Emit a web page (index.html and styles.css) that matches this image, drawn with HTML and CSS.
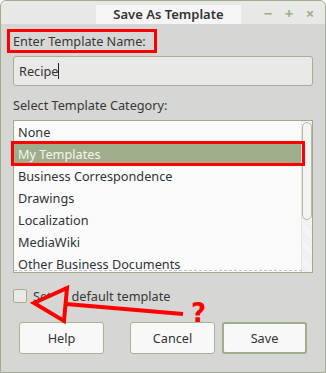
FILE: index.html
```html
<!DOCTYPE html>
<html lang="en">
<head>
<meta charset="UTF-8">
<meta name="viewport" content="width=device-width, initial-scale=1.0">
<title>Save As Template</title>
<link rel="stylesheet" href="styles.css">
</head>
<body>

<div class="window">
  <div class="titlebar">
    <div class="title">Save As Template</div>
    <div class="controls">
      <span class="ctl">&minus;</span>
      <span class="ctl">+</span>
      <span class="ctl">&times;</span>
    </div>
  </div>

  <div class="dialog">
    <div class="label">Enter Template Name:</div>
    <div class="entry">Recipe<span class="caret"></span></div>

    <div class="label second">Select Template Category:</div>
    <div class="list">
      <div class="rows">
        <div class="row">None</div>
        <div class="row selected">My Templates</div>
        <div class="row">Business Correspondence</div>
        <div class="row">Drawings</div>
        <div class="row">Localization</div>
        <div class="row">MediaWiki</div>
        <div class="row">Other Business Documents</div>
      </div>
      <div class="scrollbar"><div class="thumb"></div></div>
    </div>

    <div class="check">
      <span class="box"></span>
      <span>Set as default template</span>
    </div>

    <div class="buttons">
      <div class="btn">Help</div>
      <div class="spacer"></div>
      <div class="btn">Cancel</div>
      <div class="btn default">Save</div>
    </div>
  </div>

  <!-- red annotations drawn on top of the dialog -->
  <svg class="marks" width="326" height="373" viewBox="0 0 326 373">
    <rect x="8.5" y="30.5" width="147" height="21" fill="none" stroke="#ff0000" stroke-width="3"/>
    <rect x="12.5" y="142.5" width="291" height="22" fill="none" stroke="#ff0000" stroke-width="3"/>
    <line x1="66" y1="304" x2="183" y2="314" stroke="#ff0000" stroke-width="4"/>
    <polygon points="34,303 67,288 64,321" fill="#d6d6d4" stroke="#ff0000" stroke-width="4" stroke-linejoin="miter"/>
    <text x="191" y="322" class="qmark">?</text>
  </svg>
</div>

</body>
</html>
```

FILE: styles.css
```css
body {
  margin: 0;
  font-family: "Noto Sans", "Open Sans", sans-serif;
  font-size: 12.7px;
  color: #383838;
}
.window {
  position: relative;
  width: 326px;
  height: 373px;
  box-sizing: border-box;
  border: 1px solid #9fad8a;
  border-radius: 6px 6px 0 0;
  background-color: #d6d6d4;
  overflow: hidden;
}
.titlebar {
  display: flex;
  align-items: flex-end;
  height: 23px;
  background-color: #e8e8e7;
}
.title {
  width: 145px;
  height: 19px;
  margin-left: 95px;
  background-color: #f5f5f5;
  text-align: center;
  font-size: 13px;
  font-weight: 600;
  line-height: 18px;
  color: #333;
}
.controls {
  display: flex;
  gap: 9px;
  margin-left: auto;
  margin-right: 9px;
  align-self: center;
}
.ctl {
  width: 12px;
  text-align: center;
  color: #9fad8a;
  font-weight: bold;
  font-size: 15px;
  line-height: 16px;
}
.dialog {
  padding: 8px 12px 0 12px;
}
.label {
  line-height: 18px;
}
.label.second {
  margin-top: 10px;
}
.entry {
  display: flex;
  align-items: center;
  height: 30px;
  margin-top: 6px;
  padding-left: 5px;
  box-sizing: border-box;
  border: 1px solid #a6b08f;
  border-radius: 3px;
  background-color: #e9e9e7;
  color: #333;
}
.caret {
  display: inline-block;
  width: 1px;
  height: 16px;
  background-color: #222;
}
.list {
  position: relative;
  display: flex;
  height: 153px;
  margin-top: 6px;
  box-sizing: border-box;
  border: 1px solid #a0ab8c;
  background-color: #fafafa;
  overflow: hidden;
}
.list::after {
  content: "";
  position: absolute;
  left: 0;
  right: 10px;
  bottom: 1px;
  border-bottom: 1px dashed #c4c4c4;
}
.rows {
  flex: 1;
}
.row {
  height: 22px;
  line-height: 22px;
  padding-left: 4px;
  color: #2e3436;
}
.row.selected {
  background-color: #9fad8a;
  color: #f4f4f4;
}
.scrollbar {
  width: 10px;
  padding-top: 1px;
  background-image: repeating-linear-gradient(45deg, #eeeeee 0 1px, #f8f8f8 1px 2px);
  border-left: 1px solid #e4e4e4;
}
.thumb {
  height: 98px;
  box-sizing: border-box;
  border: 1px solid #b3bba2;
  border-radius: 5px;
  background-color: #f3f3f3;
}
.check {
  display: flex;
  align-items: center;
  gap: 6px;
  margin-top: 14px;
  line-height: 18px;
}
.box {
  width: 14px;
  height: 14px;
  box-sizing: border-box;
  border: 1px solid #a6b08f;
  border-radius: 2px;
  background-color: #e9e9e7;
}
.buttons {
  display: flex;
  gap: 7px;
  margin-top: 17px;
  padding: 0 6px;
}
.spacer {
  flex: 1;
}
.btn {
  width: 85px;
  height: 32px;
  box-sizing: border-box;
  border: 1px solid #a9b197;
  border-radius: 3px;
  background-color: #f8f8f8;
  text-align: center;
  line-height: 30px;
  color: #333;
}
.btn.default {
  border: 2px solid #9fad8a;
  line-height: 28px;
}
.marks {
  position: absolute;
  left: -1px;
  top: -1px;
  pointer-events: none;
}
.qmark {
  fill: #ff0000;
  font-family: "DejaVu Sans", sans-serif;
  font-weight: bold;
  font-size: 26px;
}
```
